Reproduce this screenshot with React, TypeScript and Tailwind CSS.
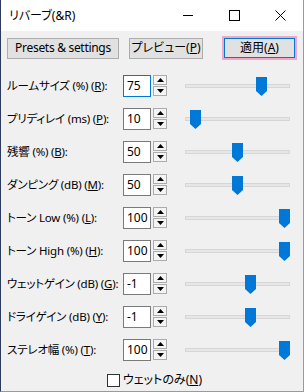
import React from 'react';

type Row = { label: string; key: string; value: string; pos: number; focused?: boolean };

const rows: Row[] = [
    { label: 'ルームサイズ (%)', key: 'R', value: '75', pos: 71, focused: true },
    { label: 'プリディレイ (ms)', key: 'P', value: '10', pos: 5 },
    { label: '残響 (%)', key: 'B', value: '50', pos: 47 },
    { label: 'ダンピング (dB)', key: 'M', value: '50', pos: 47 },
    { label: 'トーン Low (%)', key: 'L', value: '100', pos: 94 },
    { label: 'トーン High (%)', key: 'H', value: '100', pos: 94 },
    { label: 'ウェットゲイン (dB)', key: 'G', value: '-1', pos: 60 },
    { label: 'ドライゲイン (dB)', key: 'Y', value: '-1', pos: 60 },
    { label: 'ステレオ幅 (%)', key: 'T', value: '100', pos: 94 },
];

const font = { fontFamily: '"Noto Sans", "Noto Sans CJK JP", sans-serif' };

function Spin() {
    return (
        <div className="flex flex-col gap-[1px] ml-[2px] -mt-[1px] shrink-0">
            {[0, 1].map((i) => (
                <div key={i} className="w-[14px] h-[10px] border border-[#acacac] bg-[#f4f4f4] flex items-center justify-center">
                    <svg width="7" height="4" viewBox="0 0 7 4">
                        <path d={i === 0 ? 'M3.5 0 L7 4 L0 4 Z' : 'M0 0 L7 0 L3.5 4 Z'} fill="#000" />
                    </svg>
                </div>
            ))}
        </div>
    );
}

function Slider({ pos }: { pos: number }) {
    return (
        <div className="relative w-[105px] h-[22px] ml-[18px] flex items-center shrink-0">
            <div className="w-full h-[4px] bg-[#e7e7e7] border border-[#d6d6d6]" />
            <svg className="absolute top-[2px]" style={{ left: pos }} width="11" height="19" viewBox="0 0 11 19">
                <path d="M0 0 H11 V14 L5.5 19 L0 14 Z" fill="#0078d7" />
            </svg>
        </div>
    );
}

export default function App() {
    return (
        <div className="w-[304px] h-[392px] bg-[#f0f0f0] border-l border-l-[#2c3a5c] border-r border-r-[#9a9a9a] border-b border-b-[#9a9a9a] flex flex-col text-[12px] text-black overflow-hidden [font-feature-settings:'palt']" style={font}>
            <div className="h-[31px] bg-white flex items-center shrink-0">
                <span className="pl-[8px] flex-1">リバーブ(&amp;R)</span>
                <div className="w-[46px] h-full flex items-center justify-center">
                    <div className="w-[10px] h-[1px] bg-black" />
                </div>
                <div className="w-[46px] h-full flex items-center justify-center">
                    <div className="w-[11px] h-[11px] border border-black" />
                </div>
                <div className="w-[46px] h-full flex items-center justify-center">
                    <svg width="11" height="11" viewBox="0 0 11 11">
                        <path d="M0.5 0.5 L10.5 10.5 M10.5 0.5 L0.5 10.5" stroke="#000" strokeWidth="1" />
                    </svg>
                </div>
            </div>

            <div className="flex items-center mt-[5px] h-[24px]">
                <button className="ml-[6px] w-[112px] h-[21px] shrink-0 border border-[#adadad] bg-[#e1e1e1] flex items-center justify-center tracking-[-0.3px] whitespace-nowrap">
                    Presets &amp; settings
                </button>
                <button className="ml-[10px] w-[74px] h-[21px] shrink-0 border border-[#adadad] bg-[#e1e1e1] flex items-center justify-center whitespace-nowrap">
                    プレビュー(<span className="underline">P</span>)
                </button>
                <div className="ml-[19px] w-[75px] h-[24px] shrink-0 border-2 border-[#f0a8c8] flex">
                    <button className="flex-1 border border-[#0078d7] bg-[#e1e1e1] flex items-center justify-center whitespace-nowrap">
                        適用(<span className="underline">A</span>)
                    </button>
                </div>
            </div>

            <div className="flex flex-col gap-[11px] mt-[15px]">
                {rows.map((r) => (
                    <div key={r.key} className="flex items-center h-[22px]">
                        <span className="w-[122px] shrink-0 pl-[6px] whitespace-nowrap text-[11.5px] tracking-[-0.2px]">
                            {r.label} (<span className="underline">{r.key}</span>):
                        </span>
                        <div className={`w-[28px] h-[22px] shrink-0 bg-white border flex items-center pl-[3px] ${r.focused ? 'border-[#0078d7]' : 'border-[#7a7a7a]'}`}>
                            {r.value}
                        </div>
                        <Spin />
                        <Slider pos={r.pos} />
                    </div>
                ))}
            </div>

            <div className="flex items-center mt-[10px] pl-[106px] gap-[2px]">
                <div className="w-[13px] h-[13px] border border-[#333] bg-white" />
                <span className="ml-[1px]">ウェットのみ(<span className="underline">N</span>)</span>
            </div>
        </div>
    );
}
